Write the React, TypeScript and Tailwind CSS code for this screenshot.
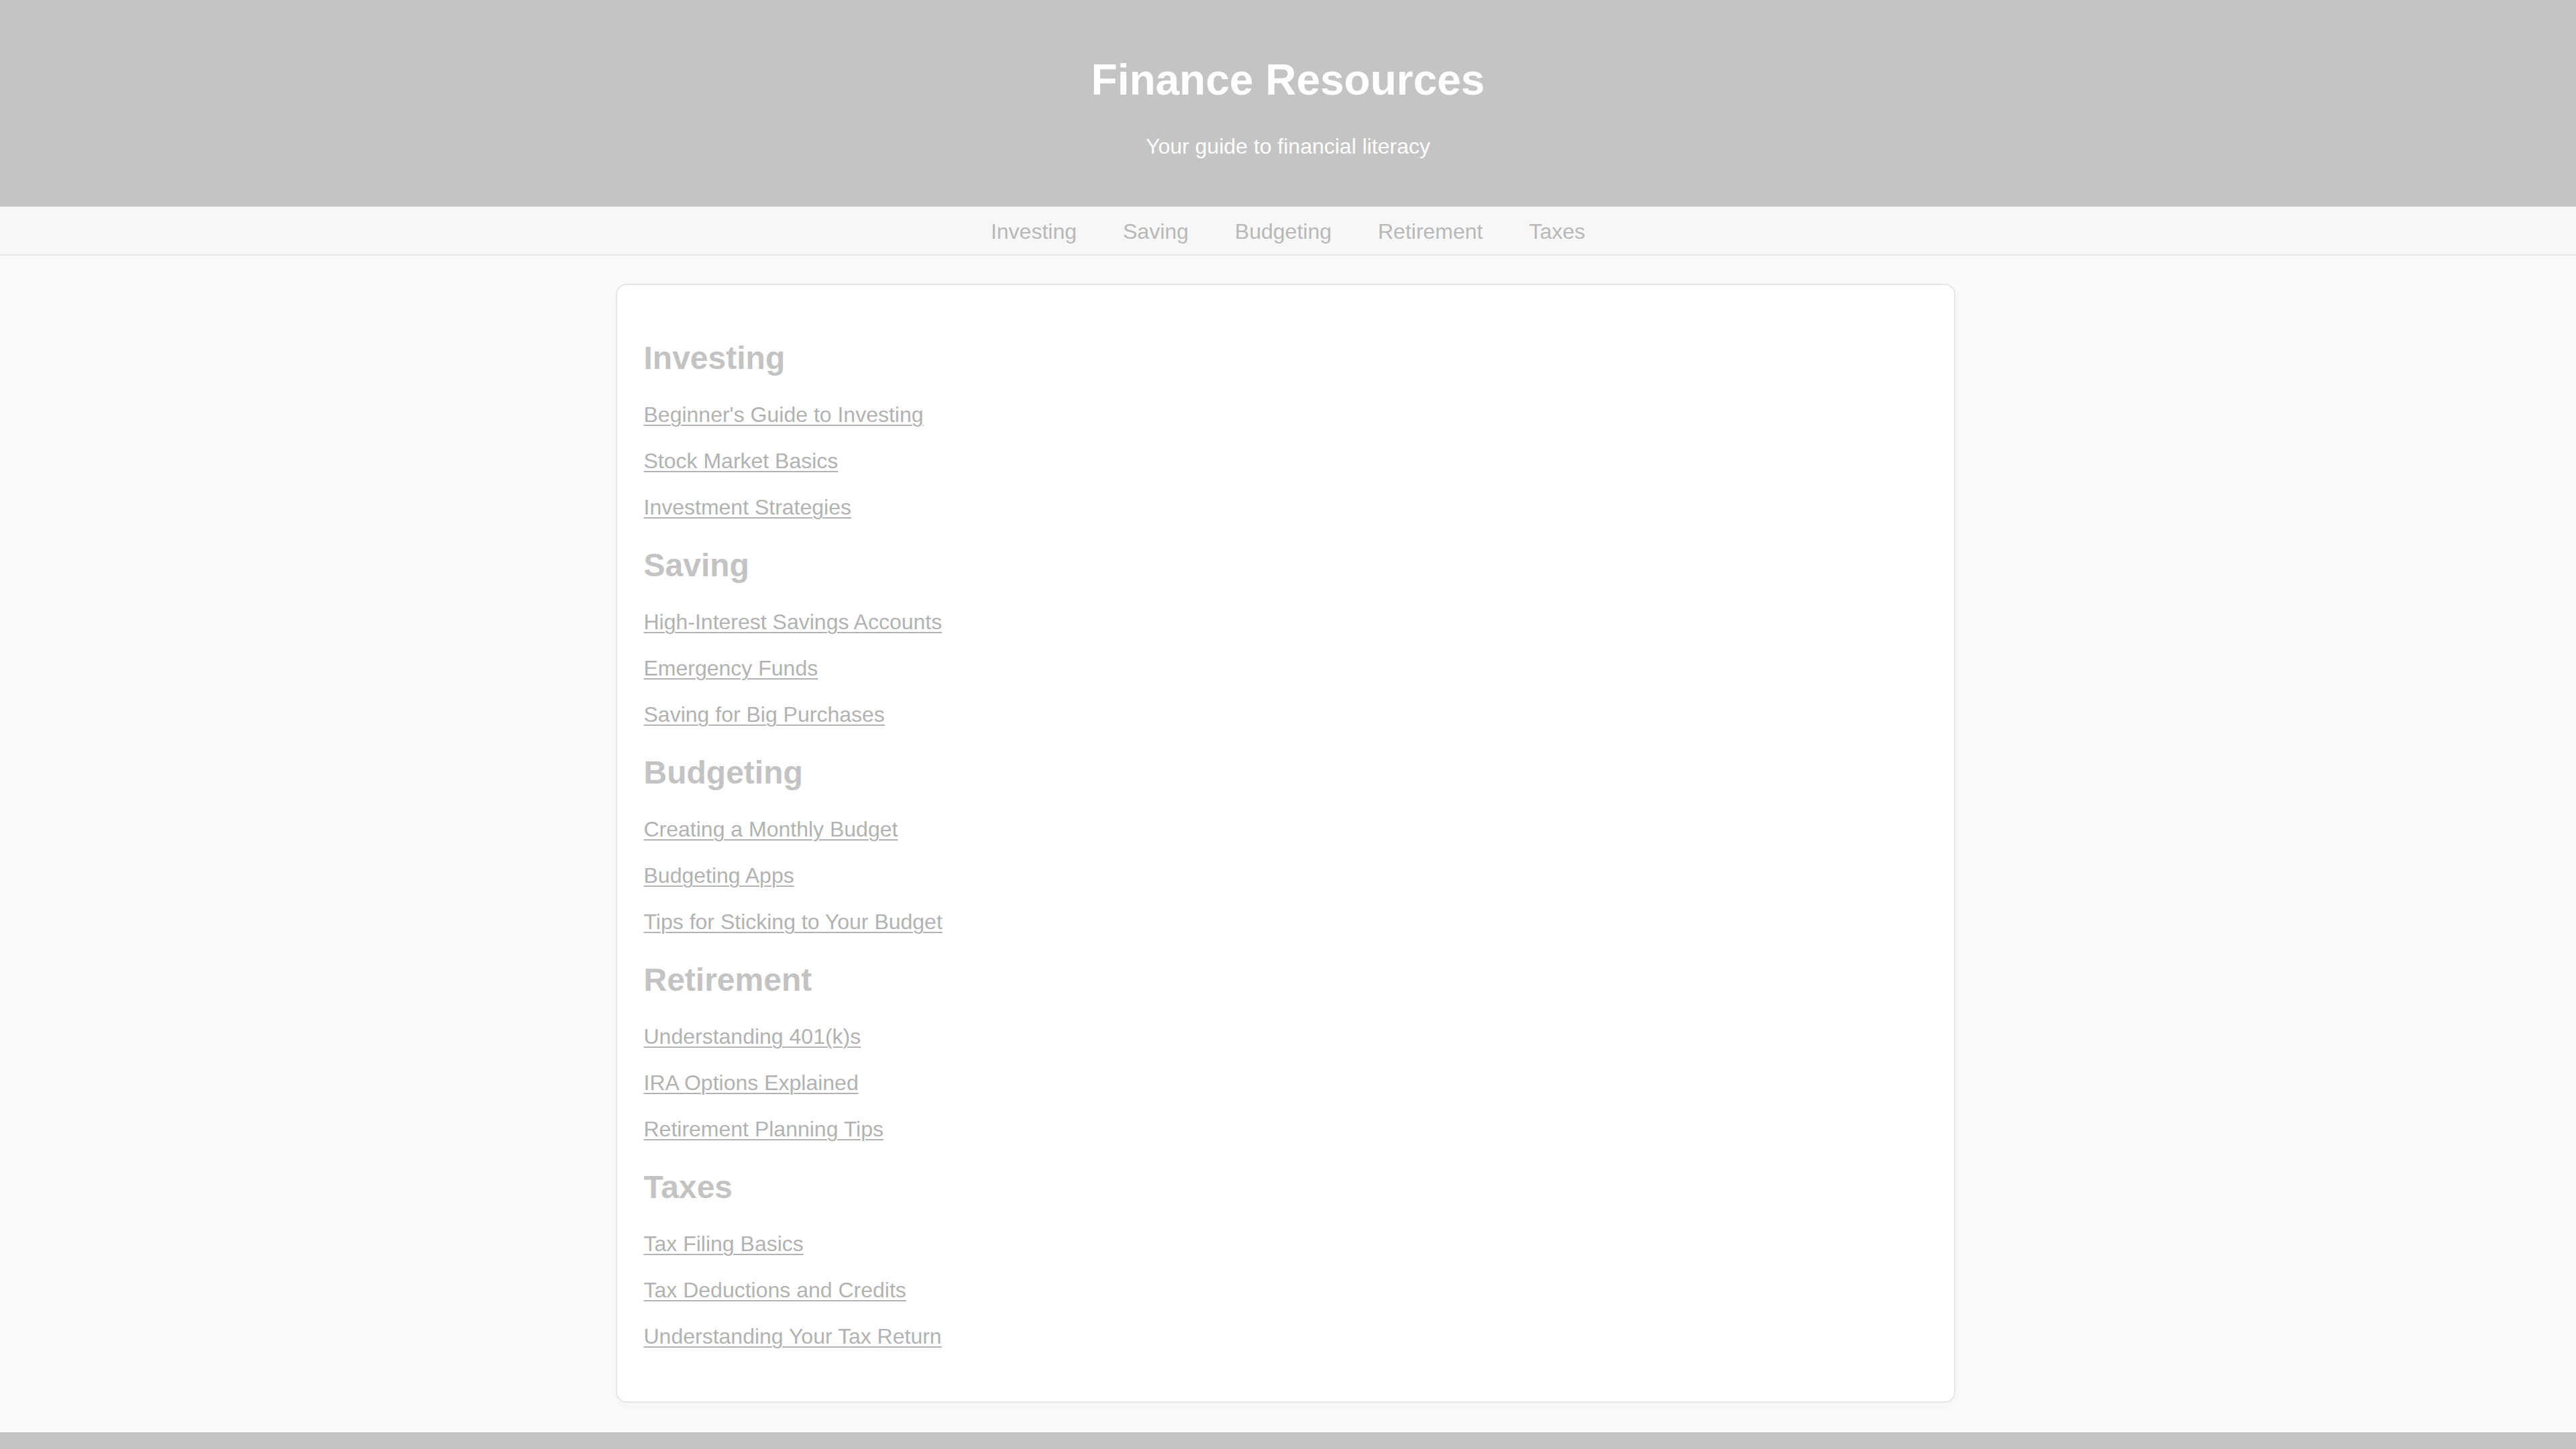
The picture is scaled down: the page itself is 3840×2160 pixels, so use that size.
import React from 'react';

const sections = [
    { title: 'Investing', links: ["Beginner's Guide to Investing", 'Stock Market Basics', 'Investment Strategies'] },
    { title: 'Saving', links: ['High-Interest Savings Accounts', 'Emergency Funds', 'Saving for Big Purchases'] },
    { title: 'Budgeting', links: ['Creating a Monthly Budget', 'Budgeting Apps', 'Tips for Sticking to Your Budget'] },
    { title: 'Retirement', links: ['Understanding 401(k)s', 'IRA Options Explained', 'Retirement Planning Tips'] },
    { title: 'Taxes', links: ['Tax Filing Basics', 'Tax Deductions and Credits', 'Understanding Your Tax Return'] },
];

const App: React.FC = () => {
    return (
        <div className="min-h-screen bg-[#fafafa] font-['Liberation_Sans',Arial,sans-serif]">
            {/* Header */}
            <header className="bg-[#c4c4c4] text-white text-center py-[40px]">
                <h1 className="text-[64px] font-bold leading-[1.15] my-[43px]">Finance Resources</h1>
                <p className="text-[32px] leading-[1.15] mb-[32px]">Your guide to financial literacy</p>
            </header>

            {/* Nav */}
            <nav className="bg-[#f7f7f7] border-b-2 border-[#e6e6e6] pt-[19px] pb-[15px]">
                <div className="flex justify-center gap-[69px] text-[32px] leading-[1.15] text-[#b8b8b8]">
                    {sections.map(s => (
                        <a key={s.title} href={`#${s.title.toLowerCase()}`}>{s.title}</a>
                    ))}
                </div>
            </nav>

            {/* Main card */}
            <main className="pt-[42px] pb-[44px] pr-[8px]">
                <div className="mx-auto w-[1997px] bg-white border-2 border-[#e6e6e6] rounded-[16px] px-[40px] pt-[81px] pb-[62px] shadow-[0_4px_14px_rgba(0,0,0,0.03)]">
                    {sections.map((s, i) => (
                        <section key={s.title} id={s.title.toLowerCase()}>
                            <h2 className="text-[48px] font-bold leading-[56px] text-[#c3c3c3]">{s.title}</h2>
                            <ul className={i === sections.length - 1 ? 'mt-[22px]' : 'mt-[22px] mb-[24px]'}>
                                {s.links.map(link => (
                                    <li key={link} className="text-[32px] leading-[69px]">
                                        <a href="#" className="text-[#b2b2b2] underline decoration-2 underline-offset-[4px]">{link}</a>
                                    </li>
                                ))}
                            </ul>
                        </section>
                    ))}
                </div>
            </main>

            {/* Footer */}
            <footer className="bg-[#c4c4c4] h-[120px]" />
        </div>
    );
};

export default App;
